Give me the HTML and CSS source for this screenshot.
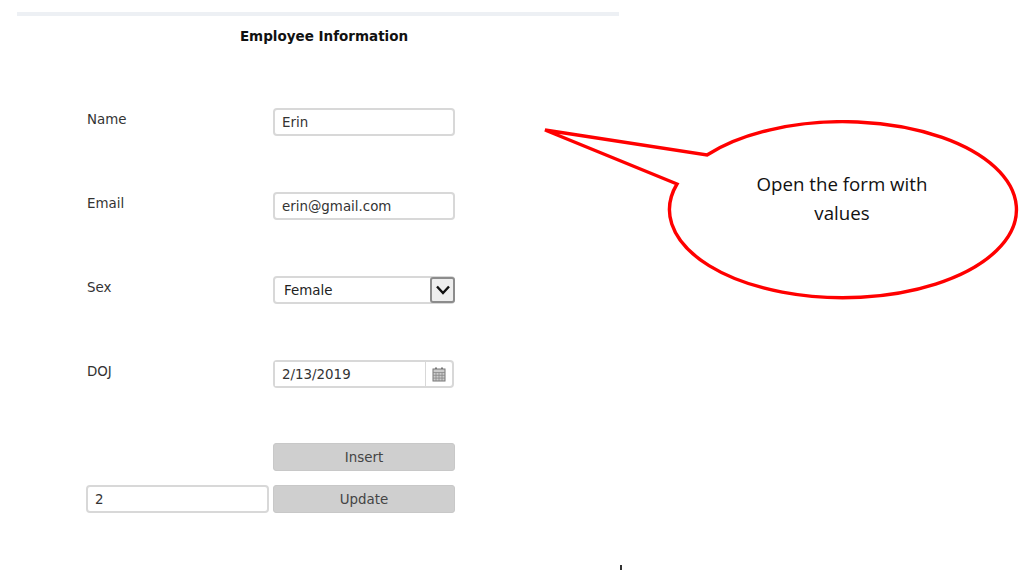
FILE: index.html
```html
<!DOCTYPE html>
<html>
<head>
    <title>Employee Information</title>
    <link rel="stylesheet" href="styles.css">
</head>
<body>
    <div class="page">
        <div class="top-bar"></div>
        <h1>Employee Information</h1>

        <form class="employee-form">
            <label class="field-label" for="name">Name</label>
            <input class="field" type="text" id="name" value="Erin">

            <label class="field-label" for="email">Email</label>
            <input class="field" type="text" id="email" value="erin@gmail.com">

            <label class="field-label" for="sex">Sex</label>
            <div class="field select-box" id="sex">
                <span class="select-value">Female</span>
                <span class="select-arrow">
                    <svg width="16" height="12" viewBox="0 0 16 12">
                        <path d="M2 2.5 L8 9 L14 2.5" fill="none" stroke="#111" stroke-width="2.4"/>
                    </svg>
                </span>
            </div>

            <label class="field-label" for="doj">DOJ</label>
            <div class="field date-box">
                <input class="date-input" type="text" id="doj" value="2/13/2019">
                <span class="date-icon">
                    <svg width="14" height="15" viewBox="0 0 14 15">
                        <rect x="3" y="0.5" width="2" height="3" fill="#777"/>
                        <rect x="9" y="0.5" width="2" height="3" fill="#777"/>
                        <rect x="1" y="2" width="12" height="12" fill="#ccc" stroke="#777"/>
                        <path d="M1 5.5 H13 M1 8.3 H13 M1 11.1 H13 M4 5.5 V14 M7 5.5 V14 M10 5.5 V14" stroke="#888" stroke-width="0.8" fill="none"/>
                    </svg>
                </span>
            </div>

            <div class="buttons">
                <button class="btn" type="button">Insert</button>
                <input class="field id-input" type="text" value="2">
                <button class="btn" type="button">Update</button>
            </div>
        </form>
    </div>

    <div class="callout">
        <svg class="callout-shape" width="480" height="180" viewBox="0 0 480 180">
            <path d="M2 10 L164 35 A173.5 88 0 1 1 134 64 Z" fill="#fff" stroke="#f00" stroke-width="3.4" stroke-linejoin="miter"/>
        </svg>
        <p class="callout-text">Open the form with<br>values</p>
    </div>

    <div class="tick"></div>
</body>
</html>
```

FILE: styles.css
```css
html, body {
    height: 100%;
}

body {
    margin: 0;
    background-color: #fff;
    font-family: "DejaVu Sans", Verdana, sans-serif;
    font-size: 13.4px;
    color: #333;
    overflow: hidden;
}

.page {
    width: 602px;
    margin-left: 17px;
    padding-top: 12px;
}

.top-bar {
    height: 4px;
    background-color: #edf0f4;
}

h1 {
    margin: 12px 0 0 0;
    padding-left: 12px;
    text-align: center;
    font-family: "DejaVu Sans", Verdana, sans-serif;
    font-size: 13.5px;
    line-height: 17px;
    font-weight: bold;
    color: #111;
}

.employee-form {
    display: grid;
    grid-template-columns: 186px 182px;
    grid-auto-rows: 28px;
    row-gap: 56px;
    margin: 63px 0 0 70px;
}

.field-label {
    line-height: 23px;
    color: #333;
}

.field {
    box-sizing: border-box;
    width: 182px;
    height: 28px;
    padding: 0 7px;
    border: 2px solid #d8d8d8;
    border-radius: 4px;
    background-color: #fff;
    font-family: "DejaVu Sans", Verdana, sans-serif;
    font-size: 13.4px;
    color: #333;
}

.select-box {
    display: flex;
    align-items: center;
    justify-content: space-between;
    padding: 0 0 0 9px;
    color: #222;
}

.select-value {
    padding-top: 1px;
}

.select-arrow {
    box-sizing: border-box;
    display: flex;
    align-items: center;
    justify-content: center;
    width: 25px;
    height: 26px;
    margin: -1px -2px -1px 0;
    border: 2px solid #8c8c8c;
    border-radius: 3px;
    background-color: #eee;
}

.date-box {
    display: flex;
    align-items: center;
    width: 181px;
    padding: 0;
}

.date-input {
    box-sizing: border-box;
    width: 151px;
    height: 24px;
    padding: 0 0 0 7px;
    border: none;
    border-right: 1px solid #d8d8d8;
    outline: none;
    font-family: "DejaVu Sans", Verdana, sans-serif;
    font-size: 13.4px;
    color: #333;
}

.date-icon {
    display: flex;
    flex: 1;
    align-items: center;
    justify-content: center;
}

.buttons {
    grid-column: 1 / span 2;
    display: grid;
    grid-template-columns: 183px 182px;
    grid-auto-rows: 28px;
    column-gap: 4px;
    row-gap: 14px;
    margin: -1px 0 0 -1px;
}

.btn {
    height: 28px;
    padding: 0;
    border: 1px solid #c8c8c8;
    border-radius: 3px;
    background-color: #cfcfcf;
    font-family: "DejaVu Sans", Verdana, sans-serif;
    font-size: 13.4px;
    color: #444;
}

.btn:first-child {
    grid-column: 2;
}

.id-input {
    width: 183px;
}

.callout {
    position: absolute;
    left: 543px;
    top: 120px;
    width: 480px;
    height: 180px;
}

.callout-shape {
    display: block;
}

.callout-text {
    position: absolute;
    left: 130px;
    top: 49px;
    width: 338px;
    margin: 0;
    text-align: center;
    font-family: "Open Sans", sans-serif;
    font-size: 18.7px;
    line-height: 29px;
    color: #111;
}

.tick {
    position: absolute;
    left: 620px;
    top: 565px;
    width: 2px;
    height: 5px;
    background-color: #333;
}
```
